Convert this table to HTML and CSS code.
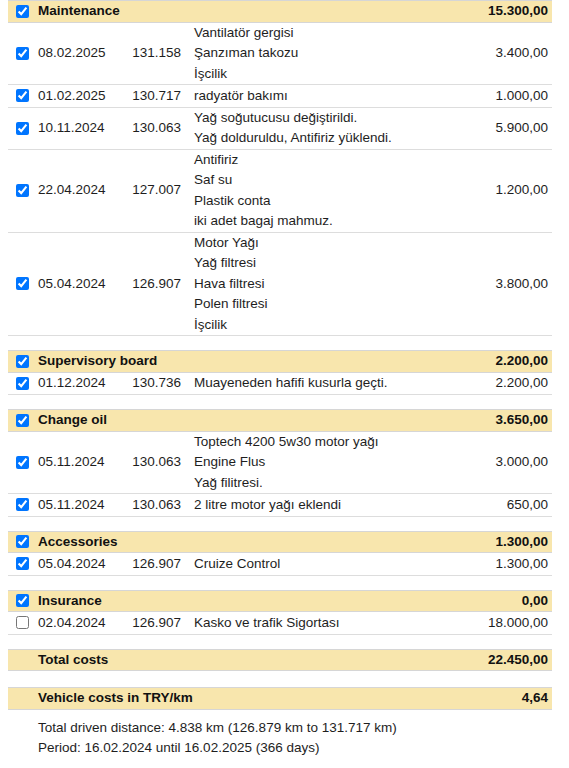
FILE: index.html
```html
<!DOCTYPE html>
<html lang="tr">
<head>
<meta charset="utf-8">
<title>Vehicle costs</title>
<link rel="stylesheet" href="styles.css">
</head>
<body>
<table class="costs">
  <colgroup>
    <col class="c-check"><col class="c-date"><col class="c-odo"><col class="c-desc"><col class="c-amount">
  </colgroup>
  <tbody>
    <tr class="group"><td class="check"><input type="checkbox" checked></td><td colspan="3">Maintenance</td><td class="amount">15.300,00</td></tr>
    <tr class="entry"><td class="check"><input type="checkbox" checked></td><td class="date">08.02.2025</td><td class="odo">131.158</td><td class="desc">Vantilatör gergisi<br>Şanzıman takozu<br>İşcilik</td><td class="amount">3.400,00</td></tr>
    <tr class="entry"><td class="check"><input type="checkbox" checked></td><td class="date">01.02.2025</td><td class="odo">130.717</td><td class="desc">radyatör bakımı</td><td class="amount">1.000,00</td></tr>
    <tr class="entry"><td class="check"><input type="checkbox" checked></td><td class="date">10.11.2024</td><td class="odo">130.063</td><td class="desc">Yağ soğutucusu değiştirildi.<br>Yağ dolduruldu, Antifiriz yüklendi.</td><td class="amount">5.900,00</td></tr>
    <tr class="entry"><td class="check"><input type="checkbox" checked></td><td class="date">22.04.2024</td><td class="odo">127.007</td><td class="desc">Antifiriz<br>Saf su<br>Plastik conta<br>iki adet bagaj mahmuz.</td><td class="amount">1.200,00</td></tr>
    <tr class="entry"><td class="check"><input type="checkbox" checked></td><td class="date">05.04.2024</td><td class="odo">126.907</td><td class="desc">Motor Yağı<br>Yağ filtresi<br>Hava filtresi<br>Polen filtresi<br>İşcilik</td><td class="amount">3.800,00</td></tr>
    <tr class="spacer"><td colspan="5"></td></tr>

    <tr class="group"><td class="check"><input type="checkbox" checked></td><td colspan="3">Supervisory board</td><td class="amount">2.200,00</td></tr>
    <tr class="entry"><td class="check"><input type="checkbox" checked></td><td class="date">01.12.2024</td><td class="odo">130.736</td><td class="desc">Muayeneden hafifi kusurla geçti.</td><td class="amount">2.200,00</td></tr>
    <tr class="spacer"><td colspan="5"></td></tr>

    <tr class="group"><td class="check"><input type="checkbox" checked></td><td colspan="3">Change oil</td><td class="amount">3.650,00</td></tr>
    <tr class="entry"><td class="check"><input type="checkbox" checked></td><td class="date">05.11.2024</td><td class="odo">130.063</td><td class="desc">Toptech 4200 5w30 motor yağı<br>Engine Flus<br>Yağ filitresi.</td><td class="amount">3.000,00</td></tr>
    <tr class="entry"><td class="check"><input type="checkbox" checked></td><td class="date">05.11.2024</td><td class="odo">130.063</td><td class="desc">2 litre motor yağı eklendi</td><td class="amount">650,00</td></tr>
    <tr class="spacer"><td colspan="5"></td></tr>

    <tr class="group"><td class="check"><input type="checkbox" checked></td><td colspan="3">Accessories</td><td class="amount">1.300,00</td></tr>
    <tr class="entry"><td class="check"><input type="checkbox" checked></td><td class="date">05.04.2024</td><td class="odo">126.907</td><td class="desc">Cruize Control</td><td class="amount">1.300,00</td></tr>
    <tr class="spacer"><td colspan="5"></td></tr>

    <tr class="group"><td class="check"><input type="checkbox" checked></td><td colspan="3">Insurance</td><td class="amount">0,00</td></tr>
    <tr class="entry"><td class="check"><input type="checkbox"></td><td class="date">02.04.2024</td><td class="odo">126.907</td><td class="desc">Kasko ve trafik Sigortası</td><td class="amount">18.000,00</td></tr>
    <tr class="spacer"><td colspan="5"></td></tr>

    <tr class="group"><td class="check"></td><td colspan="3">Total costs</td><td class="amount">22.450,00</td></tr>
    <tr class="spacer spacer-wide"><td colspan="5"></td></tr>

    <tr class="group"><td class="check"></td><td colspan="3">Vehicle costs in TRY/km</td><td class="amount">4,64</td></tr>
  </tbody>
</table>
<div class="summary">
  <p>Total driven distance: 4.838 km (126.879 km to 131.717 km)</p>
  <p>Period: 16.02.2024 until 16.02.2025 (366 days)</p>
</div>
</body>
</html>
```
FILE: styles.css
```css
html, body {
  margin: 0;
  padding: 0;
  background: #ffffff;
}
body {
  padding: 0 8px;
  font-family: "Liberation Sans", Arial, sans-serif;
  font-size: 13.5px;
  color: #1e1e1e;
}
.costs {
  width: 544px;
  table-layout: fixed;
  border-collapse: collapse;
  border-spacing: 0;
}
.c-check { width: 30px; }
.c-date { width: 77px; }
.c-odo { width: 73px; }
.c-desc { width: 264px; }
.c-amount { width: 100px; }

.costs td {
  padding: 0;
  line-height: 20.5px;
  vertical-align: middle;
  white-space: nowrap;
}
.entry td.check {
  height: 21.5px;
}
.check input {
  display: block;
  width: 13px;
  height: 13px;
  margin: 0 0 0 8px;
}
.costs td.odo {
  text-align: right;
  padding-right: 7px;
}
.costs td.desc {
  padding-left: 6px;
}
.costs td.amount {
  text-align: right;
  padding-right: 4px;
}
.entry td {
  border-bottom: 1px solid #dddddd;
}
.group td {
  background: #f8e6ad;
  font-weight: bold;
  color: #111;
  line-height: 20.5px;
  border-top: 1px solid #d6d6d6;
  border-bottom: 1px solid #d6d6d6;
}
.spacer td {
  height: 14px;
  line-height: 14px;
}
.spacer-wide td {
  height: 16px;
}
.summary {
  padding: 8px 0 0 30px;
}
.summary p {
  margin: 0;
  line-height: 20px;
}
```
